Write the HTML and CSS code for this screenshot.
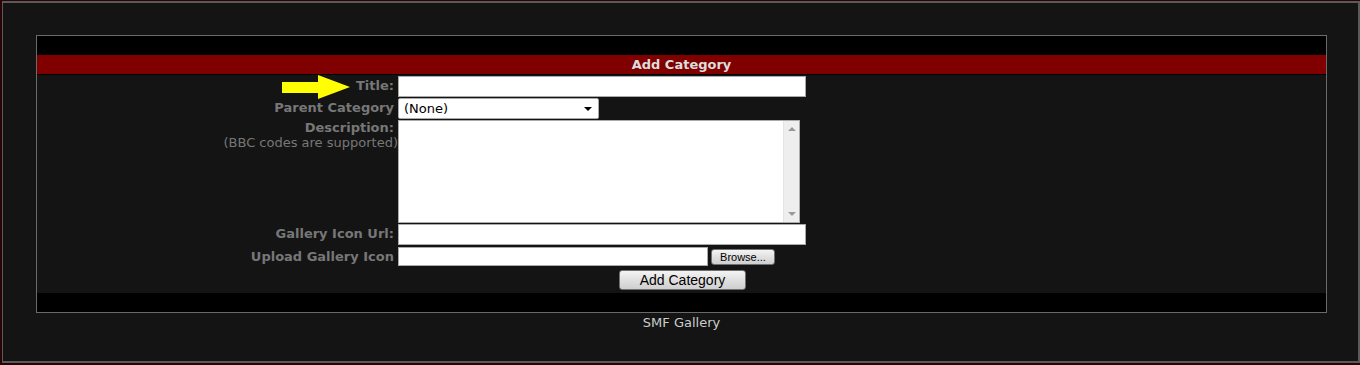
FILE: index.html
```html
<!DOCTYPE html>
<html lang="en">

<head>
  <meta charset="UTF-8">
  <title>Add Category - SMF Gallery</title>
  <link rel="stylesheet" href="styles.css">
</head>

<body>
  <div class="frame">
    <div class="tborder">
      <div class="catbg"></div>
      <div class="titlebg">Add Category</div>

      <form class="windowbg">
        <div class="label">
          <svg class="pointer" width="70" height="26" viewBox="0 0 70 26">
            <polygon points="0,7 36,7 36,0 68,12 36,24 36,18 0,18" fill="#ffff00" />
          </svg>
          Title:
        </div>
        <div class="field"><input type="text" class="text wide"></div>

        <div class="label">Parent Category</div>
        <div class="field">
          <div class="select">(None)<span class="caret"></span></div>
        </div>

        <div class="label desc">Description:<br><span class="note">(BBC codes are supported)</span></div>
        <div class="field">
          <div class="textarea">
            <div class="textarea-body"></div>
            <div class="scroll">
              <span class="up"></span>
              <span class="down"></span>
            </div>
          </div>
        </div>

        <div class="label">Gallery Icon Url:</div>
        <div class="field"><input type="text" class="text wide"></div>

        <div class="label upload">Upload Gallery Icon</div>
        <div class="field upload">
          <span class="file-box"></span>
          <span class="button small">Browse...</span>
        </div>

        <div class="submit">
          <span class="button">Add Category</span>
        </div>
      </form>

      <div class="catbg"></div>
    </div>

    <div class="copyright">SMF Gallery</div>
  </div>
</body>

</html>
```

FILE: styles.css
```css
body {
  margin: 0;
  background: #2a0404;
  font-family: "DejaVu Sans", Verdana, sans-serif;
  font-size: 13px;
}

.frame {
  margin: 1px 0 0 2px;
  height: 362px;
  box-sizing: border-box;
  padding: 32px 31px 0 33px;
  background: #141414;
  border: 1px solid #5a5a5a;
  border-width: 2px 2px 2px 1px;
}

.tborder {
  border: 1px solid #6a6a6a;
  background: #141414;
}

.catbg {
  height: 19px;
  background: #000;
}

.titlebg {
  height: 19px;
  line-height: 19px;
  background: #800000;
  border-bottom: 1px solid #000;
  color: #ddd;
  font-weight: bold;
  text-align: center;
}

.windowbg {
  margin: 0;
  height: 218px;
  box-sizing: border-box;
  padding-top: 1px;
  display: grid;
  grid-template-columns: 361px 1fr;
  grid-auto-rows: min-content;
  row-gap: 1px;
}

.label {
  position: relative;
  padding-right: 4px;
  color: #777;
  font-weight: bold;
  text-align: right;
  line-height: 20px;
}

.label.desc {
  line-height: 15px;
}

.label .note {
  font-weight: normal;
  position: relative;
  right: -4px;
}

.pointer {
  position: absolute;
  left: 245px;
  top: -1px;
}

.field {
  display: flex;
  align-items: flex-start;
}

input.text {
  margin: 0;
  height: 21px;
  box-sizing: border-box;
  border: 1px solid #a9a9a9;
  background: #fff;
}

.wide {
  width: 408px;
}

.select {
  position: relative;
  width: 201px;
  height: 21px;
  box-sizing: border-box;
  padding-left: 5px;
  border: 1px solid #a9a9a9;
  border-radius: 2px;
  background: #fff;
  color: #000;
  font-family: "DejaVu Sans", Verdana, sans-serif;
  font-size: 13px;
  line-height: 19px;
}

.caret {
  position: absolute;
  right: 6px;
  top: 8px;
  border-left: 4px solid transparent;
  border-right: 4px solid transparent;
  border-top: 4px solid #000;
}

.textarea {
  display: flex;
  width: 402px;
  height: 103px;
  box-sizing: border-box;
  border: 1px solid #ababab;
  background: #fff;
}

.textarea-body {
  flex: 1;
}

.scroll {
  width: 15px;
  background: #eee;
  border-left: 1px solid #e4e4e4;
  display: flex;
  flex-direction: column;
  justify-content: space-between;
  align-items: center;
  padding: 6px 0;
}

.scroll .up {
  border-left: 4px solid transparent;
  border-right: 4px solid transparent;
  border-bottom: 4px solid #999;
}

.scroll .down {
  border-left: 4px solid transparent;
  border-right: 4px solid transparent;
  border-top: 4px solid #999;
}

.label.upload {
  margin-top: 1px;
  line-height: 19px;
}

.field.upload {
  margin-top: 1px;
  align-items: center;
}

.file-box {
  width: 310px;
  height: 19px;
  box-sizing: border-box;
  border: 1px solid #a9a9a9;
  background: #fff;
}

.button {
  display: inline-block;
  box-sizing: border-box;
  border: 1px solid #707070;
  border-radius: 3px;
  background: linear-gradient(#f4f4f4, #e0e0e0 50%, #cfcfcf);
  color: #000;
  font-family: "Liberation Sans", Arial, sans-serif;
  text-align: center;
}

.button.small {
  margin-left: 3px;
  width: 64px;
  height: 16px;
  line-height: 14px;
  font-size: 11px;
}

.submit {
  grid-column: 1 / 3;
  margin-top: 3px;
  text-align: center;
}

.submit .button {
  width: 127px;
  height: 20px;
  line-height: 18px;
  font-size: 14px;
  margin-left: 2px;
}

.copyright {
  margin-top: 2px;
  color: #ccc;
  text-align: center;
  line-height: 16px;
}
```
